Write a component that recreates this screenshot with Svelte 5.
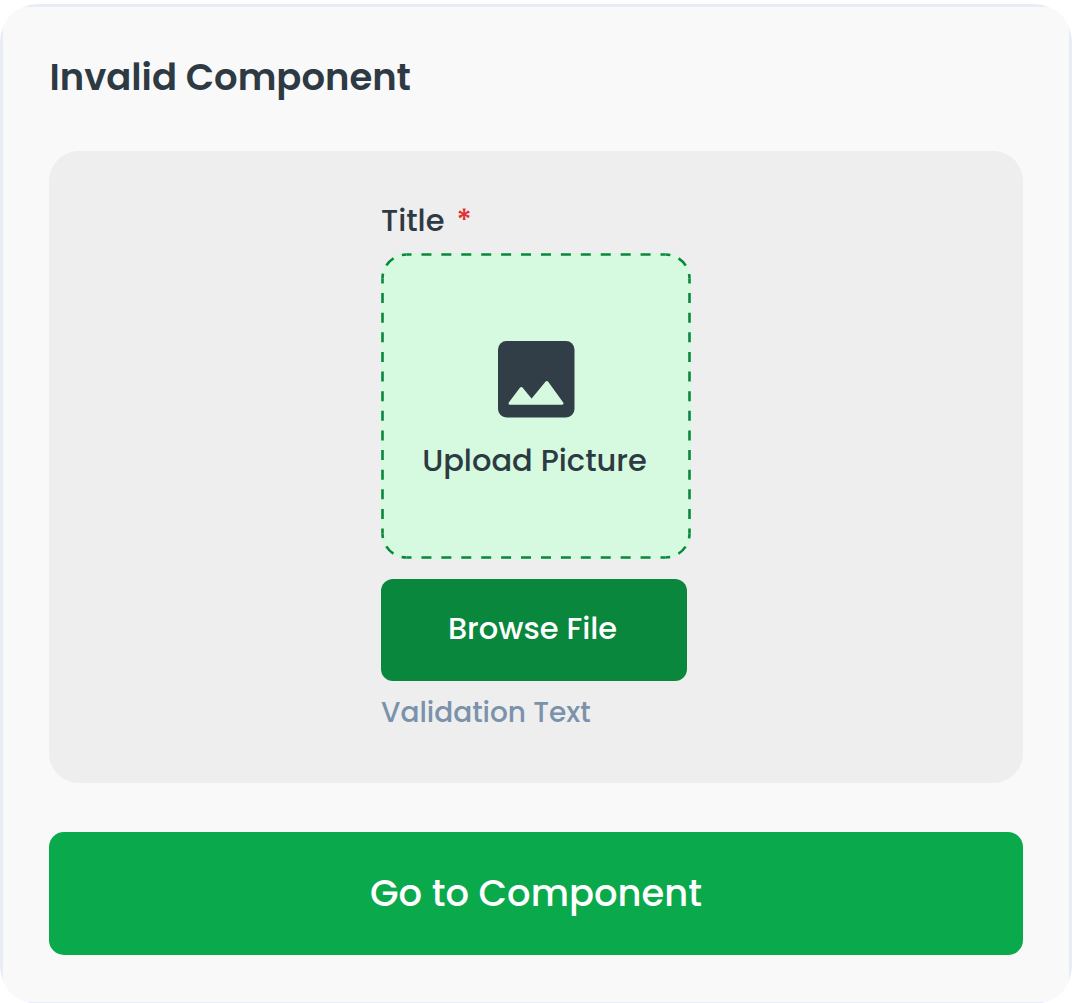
<script>
  let heading = 'Invalid Component';
  let label = 'Title';
</script>

<main class="frame">
  <section class="card">
    <h1><span>{heading}</span></h1>
    <div class="preview">
      <div class="field">
        <div class="label"><span class="name">{label}</span><span class="required">*</span></div>
        <div class="dropzone">
          <svg class="outline" viewBox="0 0 310 306" aria-hidden="true">
            <rect width="310" height="306" rx="25.5" />
            <path class="across" d="M25.5 1.5H284.5M25.5 304.5H284.5" />
            <path class="down" d="M1.5 25.5V280.5M308.5 25.5V280.5" />
            <path class="corner" d="M1.5 25.5A24 24 0 0 1 25.5 1.5" />
            <path class="corner" d="M284.5 1.5A24 24 0 0 1 308.5 25.5" />
            <path class="corner" d="M308.5 280.5A24 24 0 0 1 284.5 304.5" />
            <path class="corner" d="M25.5 304.5A24 24 0 0 1 1.5 280.5" />
          </svg>
          <svg class="picture" viewBox="0 0 77 77" aria-hidden="true">
            <rect width="76.5" height="76.5" rx="8.5" />
            <path d="M12 62.3L23.3 47.5L33.6 60L48.8 41.5L64 62.3Z" />
          </svg>
          <span class="upload">Upload Picture</span>
        </div>
        <button class="browse"><span>Browse File</span></button>
        <div class="validation"><span>Validation Text</span></div>
      </div>
    </div>
    <button class="go"><span>Go to Component</span></button>
  </section>
</main>

<style>
  :global(body) {
    background: #fff;
    overflow: hidden;
  }

  .frame {
    box-sizing: border-box;
    height: 1000px;
    margin-top: 4px;
    padding: 3px 3px 2px;
    overflow: hidden;
    border-radius: 38px;
    background: #e7ecf7;
    font-family: Poppins, Inter, sans-serif;
    font-feature-settings: 'cv11';
    font-weight: 500;
    color: #2d3a43;
  }

  .card {
    box-sizing: border-box;
    height: 995px;
    padding: 45px 46px 0;
    background: #f9f9f9;
  }

  h1 {
    margin: 0 0 49px;
    padding-left: 0.5px;
    font-size: 36.95px;
    line-height: 50px;
    font-weight: 600;
    white-space: nowrap;
  }

  .preview {
    box-sizing: border-box;
    height: 632px;
    padding-top: 50px;
    border-radius: 30px;
    background: #eee;
  }

  .field {
    display: flex;
    flex-direction: column;
    align-items: flex-start;
    width: 310px;
    margin-left: 332px;
  }

  .label {
    display: flex;
    gap: 12px;
    height: 52px;
    font-size: 30.5px;
    line-height: 39px;
  }

  .required {
    color: #e03131;
  }

  .dropzone {
    position: relative;
    display: flex;
    flex-direction: column;
    align-items: center;
    box-sizing: border-box;
    width: 310px;
    height: 306px;
    padding-top: 88px;
  }

  .outline {
    position: absolute;
    inset: 0;
    fill: none;
    stroke: #08873d;
    stroke-width: 2.6;
  }

  .outline rect {
    fill: #d6fadf;
    stroke: none;
  }

  .across {
    stroke-dasharray: 10 9.923;
    stroke-dashoffset: 5;
  }

  .down {
    stroke-dasharray: 10 9.615;
    stroke-dashoffset: 5;
  }

  .corner {
    stroke-dasharray: 10 8.85;
    stroke-dashoffset: 5;
  }

  .picture {
    position: relative;
    width: 77px;
    height: 77px;
    fill: #323e47;
  }

  .picture path {
    fill: #d6fadf;
    stroke: #d6fadf;
    stroke-width: 3;
    stroke-linejoin: round;
  }

  .upload {
    position: relative;
    margin-top: 24px;
    padding-right: 3px;
    font-size: 30.5px;
    line-height: 38px;
    white-space: nowrap;
  }

  button {
    padding: 0;
    border: 0;
    color: #fff;
    font: inherit;
    font-feature-settings: inherit;
  }

  .browse {
    width: 306px;
    height: 102px;
    margin-top: 20px;
    padding: 0 3px 2px 0;
    border-radius: 12px;
    background: #08873d;
    font-size: 30.5px;
  }

  .validation {
    margin-top: 13px;
    color: #7b92aa;
    font-size: 28px;
    line-height: 38px;
  }

  .go {
    display: block;
    width: 100%;
    height: 123px;
    margin-top: 49px;
    padding-bottom: 2px;
    border-radius: 15px;
    background: #0aa94c;
    font-size: 36.9px;
  }
</style>
